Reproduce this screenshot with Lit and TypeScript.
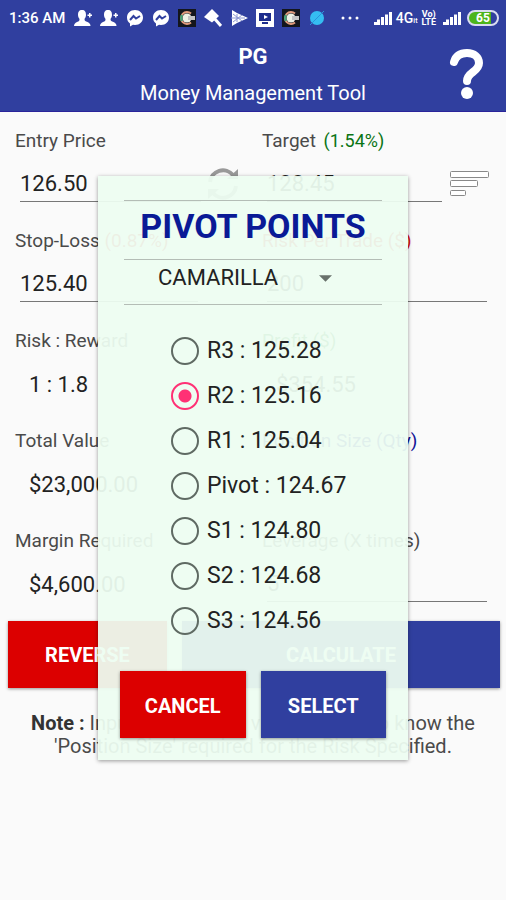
import { LitElement, html, svg, css } from "lit";
import { customElement, state } from "lit/decorators.js";

const LEVELS = [
  ["R3", "125.28"],
  ["R2", "125.16"],
  ["R1", "125.04"],
  ["Pivot", "124.67"],
  ["S1", "124.80"],
  ["S2", "124.68"],
  ["S3", "124.56"],
];

@customElement("status-bar")
class StatusBar extends LitElement {
  static styles = css`
    :host {
      display: flex;
      align-items: center;
      height: 36px;
      padding: 0 7px 0 9px;
      box-sizing: border-box;
      color: #fff;
      font: 500 15px/20px Roboto, sans-serif;
      white-space: nowrap;
    }
    .icons {
      display: flex;
      gap: 8px;
      margin-left: 9px;
    }
    .system {
      display: flex;
      align-items: center;
      margin-left: auto;
    }
    .dots { margin-right: 15px; }
    .net { margin-left: 4px; font-size: 14px; }
    .tiny { font-size: 7px; line-height: 7px; padding-top: 6px; }
    .volte {
      font-weight: 700;
      font-size: 9px;
      line-height: 8px;
      text-align: center;
      margin: 0 7px 0 4px;
    }
    .battery {
      width: 32px;
      height: 16px;
      box-sizing: border-box;
      margin-left: 6px;
      border: 2px solid #d9dcf0;
      border-radius: 8px;
      background: linear-gradient(90deg, #4cb51c 80%, #303f9f 80%);
      font-weight: 700;
      font-size: 12px;
      line-height: 12px;
      text-align: center;
    }
    svg { display: block; }
  `;

  person() {
    return html`<svg width="18" height="18" viewBox="0 0 18 18" fill="#fff">
      <path d="M8 1c3 0 4 2 4 5 0 2-1 3-1.500 4 0 2 1 2 3 3 2 1 3 2 3 4H0c0-2 1-3 3-4 2-1 2.500-1 2.500-3C5 9 4 8 4 6c0-3 1-5 4-5zM13.500 5.500h1.500v-1.500h1.500v1.500H18V7h-1.500v1.500H15V7h-1.500z" />
    </svg>`;
  }
  messenger() {
    return html`<svg width="18" height="18" viewBox="0 0 18 18">
      <path fill="#fff" d="M9 1c4.700 0 8 3.300 8 7.500S13.700 16 9 16l-2-.2L4 17.500V14.500C2 13 1 11 1 8.500 1 4.300 4.300 1 9 1z" />
      <path d="M4 11l3.500-4L10 9.500 14 7" fill="none" stroke="#303f9f" stroke-width="2" />
    </svg>`;
  }
  coin() {
    return html`<svg width="18" height="18" viewBox="0 0 18 18">
      <path fill="#14161c" d="M0 0h18v18H0z" />
      <path d="M13 4.500a6 6 0 1 0 0 9" fill="none" stroke="#e09a7c" stroke-width="2" />
      <circle cx="9" cy="9" r="4.500" fill="#eef2e6" />
      <path d="M10 9h7" stroke="#c4c4c4" stroke-width="4" />
      <path d="M4 6a6 6 0 0 0 0 6" stroke="#3fa67a" stroke-width="2" fill="none" />
    </svg>`;
  }
  signal() {
    return html`<svg width="18" height="13" viewBox="0 0 18 13" fill="#fff">
      ${[0, 1, 2, 3, 4].map((i) => svg`<rect x=${i * 4 - (i ? 1 : 0)} y=${10 - i * 2.500} width="3" height=${3 + i * 2.500} />`)}
    </svg>`;
  }

  render() {
    return html`
      <span>1:36 AM</span>
      <div class="icons">
        ${this.person()}${this.person()}${this.messenger()}${this.messenger()}${this.coin()}
        <svg width="18" height="18" viewBox="0 0 18 18">
          <path fill="#fff" d="M8 0l7 7-7 6.500L0 8z" />
          <path d="M10 9l7 8" stroke="#fff" stroke-width="3" />
        </svg>
        <svg width="18" height="18" viewBox="0 0 18 18">
          <path fill="#fff" d="M2 1l5 3v10l-5 3zM7 4l11 5-11 5z" />
          <path d="M1 9h14M7 5v8M3 5l9 7M3 13l9-7" stroke="#8d97d2" />
        </svg>
        <svg width="18" height="18" viewBox="0 0 18 18">
          <path fill="#fff" d="M0 0h18v18H0z" />
          <path fill="#1d2d8c" d="M3 4h12v8H3zM6 13h6v2H6z" />
          <path fill="#fff" d="M8 6l4 2-4 2z" />
        </svg>
        ${this.coin()}
        <svg width="18" height="18" viewBox="0 0 18 18">
          <circle cx="9" cy="9" r="7" fill="#35bdf2" />
          <path d="M2 16L16 2" stroke="#2a93dc" />
        </svg>
      </div>
      <div class="system">
        <svg class="dots" width="18" height="4" viewBox="0 0 18 4" fill="#fff">
          <circle cx="2" cy="2" r="1.500" /><circle cx="9" cy="2" r="1.500" /><circle cx="16" cy="2" r="1.500" />
        </svg>
        ${this.signal()}
        <span class="net">4G</span><span class="tiny">it</span>
        <span class="volte">Vo)<br />LTE</span>
        ${this.signal()}
        <span class="battery">65</span>
      </div>
    `;
  }
}

@customElement("pivot-dialog")
class PivotDialog extends LitElement {
  @state() selected = "R2";

  static styles = css`
    :host {
      display: block;
      box-sizing: border-box;
      width: 310px;
      padding: 24px 22px 22px;
      background: rgba(237, 253, 241, 0.94);
      box-shadow: 0 1px 4px rgba(0, 0, 0, 0.4);
      color: #222;
      font: 22px/26px Roboto, sans-serif;
    }
    .head {
      margin: 0 4px;
      border: solid #b4bdb6;
      border-width: 1px 0;
    }
    h2 {
      margin: 0;
      padding-bottom: 8px;
      color: #0a1a96;
      font-size: 34px;
      line-height: 50px;
      text-align: center;
      white-space: nowrap;
    }
    .picker {
      display: flex;
      align-items: center;
      height: 45px;
      margin: 0 4px 23px;
      padding: 0 50px 8px 34px;
      box-sizing: border-box;
      border-bottom: 1px solid #b4bdb6;
    }
    select {
      flex: 1;
      min-width: 0;
      appearance: none;
      border: 0;
      padding: 0;
      background: none;
      color: inherit;
      font: inherit;
    }
    fieldset {
      margin: 0;
      padding: 0 0 0 51px;
      border: 0;
    }
    .option {
      display: flex;
      align-items: center;
      gap: 8px;
      height: 45px;
      font-size: 23px;
      white-space: nowrap;
    }
    input {
      appearance: none;
      flex: none;
      width: 28px;
      height: 28px;
      box-sizing: border-box;
      margin: 0;
      border: 2px solid #5f6a63;
      border-radius: 50%;
    }
    input:checked {
      border-color: #ff3175;
      background: radial-gradient(circle, #ff3175 6px, transparent 7px);
    }
    .actions {
      display: flex;
      gap: 15px;
      margin-top: 28px;
    }
    button {
      flex: 1;
      height: 67px;
      padding: 2px 0 0;
      border: 0;
      background: #303f9f;
      box-shadow: 0 1px 3px rgba(0, 0, 0, 0.4);
      color: #fff;
      font: 700 20px/24px Roboto, sans-serif;
    }
    .cancel { background: #dc0000; }
  `;

  render() {
    return html`
      <div class="head"><h2 id="title">PIVOT POINTS</h2></div>
      <div class="picker">
        <select aria-label="Pivot method">
          <option>CAMARILLA</option>
        </select>
        <svg width="13" height="7" viewBox="0 0 14 7"><path d="M0 0h14L7 7z" fill="#68716b" /></svg>
      </div>
      <fieldset aria-labelledby="title">
        ${LEVELS.map(
          ([name, price]) => html`<label class="option">
            <input
              type="radio"
              name="level"
              .checked=${this.selected === name}
              @change=${() => (this.selected = name)}
            />${name} : ${price}
          </label>`
        )}
      </fieldset>
      <div class="actions">
        <button type="button" class="cancel">CANCEL</button>
        <button type="button">SELECT</button>
      </div>
    `;
  }
}

@customElement("app-root")
class AppRoot extends LitElement {
  static styles = css`
    :host {
      display: block;
      position: relative;
      min-height: 100vh;
      background: #fafafa;
      color: #4a4a4a;
      font: 20px/24px Roboto, sans-serif;
    }
    .top { background: #303f9f; }
    header {
      display: grid;
      grid-template-columns: 80px 1fr 80px;
      align-items: center;
      height: 76px;
      box-sizing: border-box;
      border-bottom: 1px solid #2a249a;
      color: #fff;
      text-align: center;
    }
    h1 {
      margin: 0 0 12px;
      font-size: 22px;
      line-height: 24px;
    }
    header p { margin: 0; }
    .titles { grid-column: 2; padding-top: 3px; }
    .help {
      justify-self: center;
      padding: 0;
      border: 0;
      background: none;
    }
    svg { display: block; }
    .fields {
      display: grid;
      grid-template-columns: 1fr 1fr;
      gap: 27px 22px;
      padding: 17px 19px 0 15px;
      font-size: 19px;
    }
    .field { min-width: 0; white-space: nowrap; }
    .green { color: #0a7414; }
    .gain { margin-left: 3px; font-size: 18px; }
    .red { color: #d81414; }
    .blue { color: #141496; }
    .line {
      display: flex;
      align-items: center;
      gap: 8px;
      height: 37px;
      margin: 12px 0 0 5px;
    }
    input {
      flex: 1;
      min-width: 0;
      width: 0;
      height: 37px;
      box-sizing: border-box;
      border: 0;
      border-bottom: 1px solid #777;
      border-radius: 0;
      padding: 1px 0 0;
      background: none;
      color: #222;
      font: 22px/26px Roboto, sans-serif;
    }
    .short { margin-right: 42px; }
    .entry { gap: 4px; margin-right: -1px; }
    .target { margin-right: -2px; }
    output { margin-left: 9px; padding-top: 3px; color: #222; font-size: 22px; }
    .icon { padding: 0; border: 0; background: none; }
    .actions {
      display: grid;
      grid-template-columns: 1fr 2fr;
      gap: 15px;
      padding: 19px 6px 0 8px;
    }
    .action {
      height: 67px;
      border: 0;
      padding: 0;
      background: #303f9f;
      box-shadow: 0 1px 3px rgba(0, 0, 0, 0.4);
      color: #fff;
      font: 700 20px/24px Roboto, sans-serif;
    }
    .reverse { background: #dc0000; }
    .note {
      margin: 24px 0 0;
      line-height: 23px;
      text-align: center;
    }
    .note b { color: #333; }
    .overlay {
      position: absolute;
      inset: 36px 0 0;
      display: flex;
      align-items: center;
      justify-content: center;
    }
  `;

  render() {
    return html`
      <div class="top">
        <status-bar></status-bar>
        <header>
          <div class="titles">
            <h1>PG</h1>
            <p>Money Management Tool</p>
          </div>
          <button class="help" aria-label="Help">
            <svg width="36" height="52" viewBox="0 0 36 52">
              <path d="M6 14C8 7 13 5 19 5c7 0 12 4 12 10 0 9-12 9-12 18" fill="none" stroke="#fff" stroke-width="8" stroke-linecap="round" />
              <circle cx="19" cy="45" r="6" fill="#fff" />
            </svg>
          </button>
        </header>
      </div>
      <main>
        <div class="fields">
          <div class="field">
            <label for="entry">Entry Price</label>
            <div class="line entry">
              <input id="entry" value="126.50" />
              <button class="icon" aria-label="Refresh price">
                <svg width="36" height="36" viewBox="0 0 36 36" fill="none" stroke="#999" stroke-width="4">
                  <path d="M5 16a13 13 0 0 1 23-7M31 20a13 13 0 0 1-23 7" />
                  <path d="M33 3v10H22z" fill="#999" stroke="none" />
                  <path d="M3 33V23h11z" fill="#999" stroke="none" />
                </svg>
              </button>
            </div>
          </div>
          <div class="field">
            <label for="target">Target <span class="green gain">(1.54%)</span></label>
            <div class="line target">
              <input id="target" value="128.45" />
              <button class="icon" aria-label="Pivot points">
                <svg width="39" height="26" viewBox="0 0 39 26" fill="#fff" stroke="#888" stroke-width="1">
                  <rect x="0.500" y="0.500" width="38" height="6" rx="1" />
                  <rect x="0.500" y="9.500" width="27" height="6" rx="1" />
                  <rect x="0.500" y="19.500" width="15" height="5" rx="1" />
                </svg>
              </button>
            </div>
          </div>
          <div class="field">
            <label for="stop">Stop-Loss <span class="red">(0.87%)</span></label>
            <div class="line short"><input id="stop" value="125.40" /></div>
          </div>
          <div class="field">
            <label class="red" for="risk">Risk Per Trade ($)</label>
            <div class="line"><input id="risk" value="200" /></div>
          </div>
          <div class="field">
            <span>Risk : Reward</span>
            <div class="line"><output>1 : 1.8</output></div>
          </div>
          <div class="field">
            <span class="green">Profit ($)</span>
            <div class="line"><output>$354.55</output></div>
          </div>
          <div class="field">
            <span>Total Value</span>
            <div class="line"><output>$23,000.00</output></div>
          </div>
          <div class="field">
            <span class="blue">Position Size (Qty)</span>
            <div class="line"></div>
          </div>
          <div class="field">
            <span>Margin Required</span>
            <div class="line"><output>$4,600.00</output></div>
          </div>
          <div class="field">
            <label for="leverage">Leverage (X times)</label>
            <div class="line"><input id="leverage" value="5" /></div>
          </div>
        </div>
        <div class="actions">
          <button class="action reverse">REVERSE</button>
          <button class="action">CALCULATE</button>
        </div>
        <p class="note">
          <b>Note :</b> Input the required values above to know the<br />'Position Size' required for the Risk Specified.
        </p>
      </main>
      <div class="overlay"><pivot-dialog role="dialog" aria-label="Pivot points"></pivot-dialog></div>
    `;
  }
}
